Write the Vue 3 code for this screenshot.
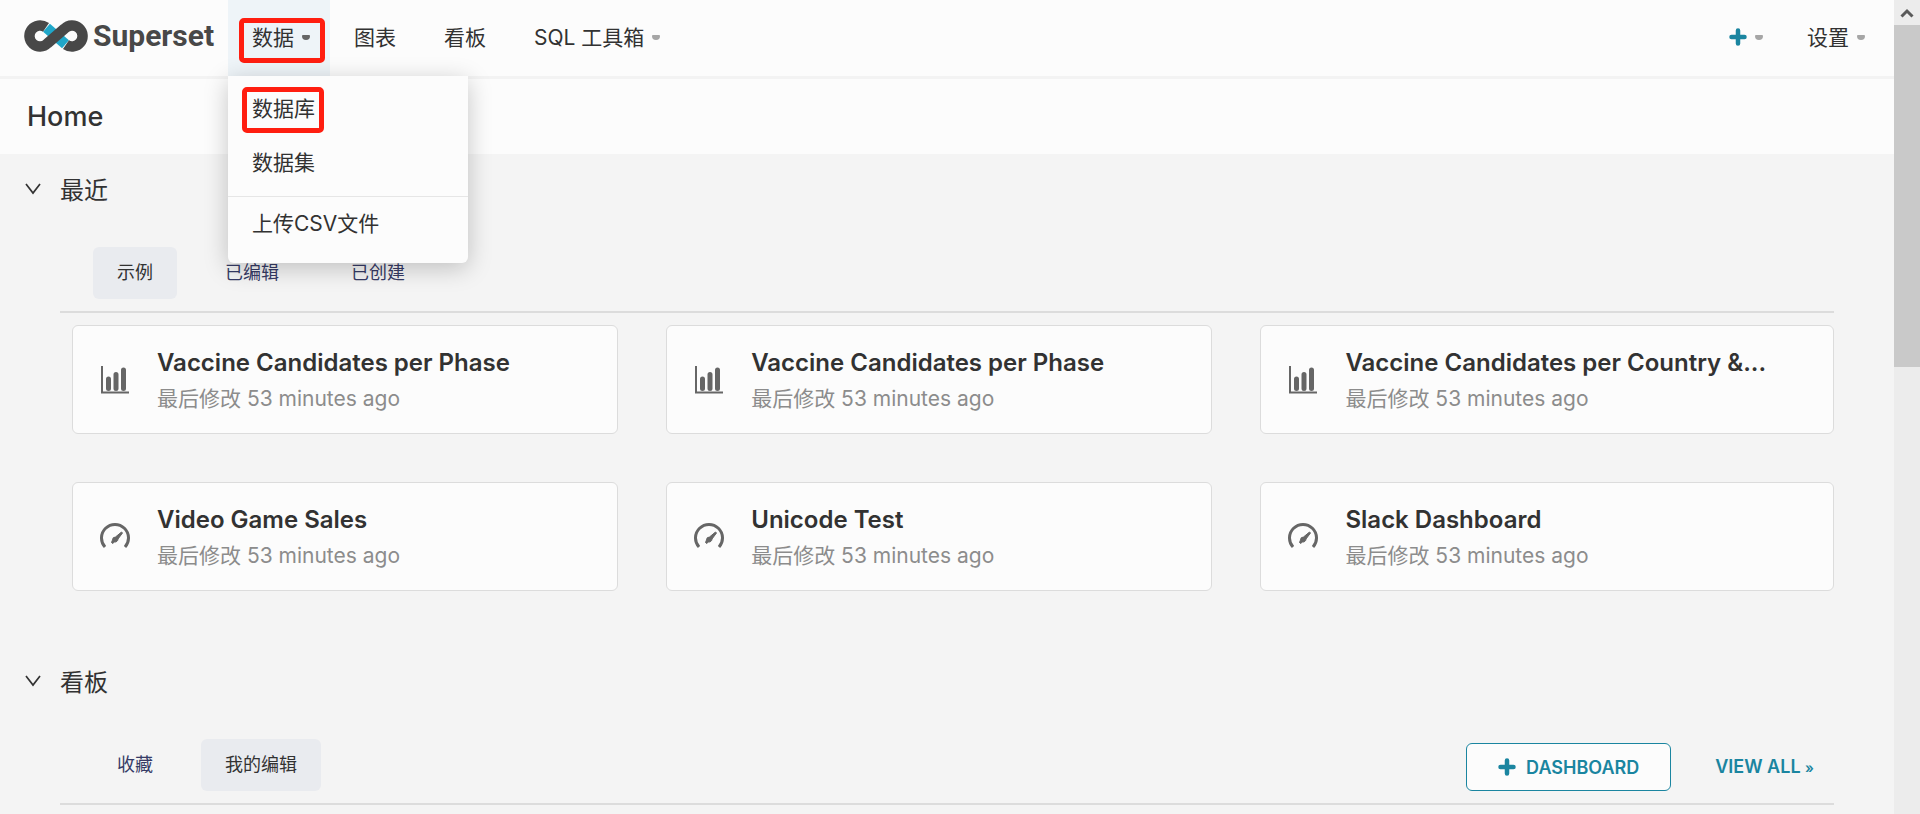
<script setup>
import { ref } from 'vue'

const menuOpen = ref(true)
const recentTab = ref('示例')
const boardTab = ref('我的编辑')

const recentTabs = ['示例', '已编辑', '已创建']
const boardTabs = ['收藏', '我的编辑']

const cards = [
  { title: 'Vaccine Candidates per Phase', type: 'chart' },
  { title: 'Vaccine Candidates per Phase', type: 'chart' },
  { title: 'Vaccine Candidates per Country &...', type: 'chart' },
  { title: 'Video Game Sales', type: 'dashboard' },
  { title: 'Unicode Test', type: 'dashboard' },
  { title: 'Slack Dashboard', type: 'dashboard' }
]
</script>
<template>
  <div class="page">
    <div class="content">
      <header class="navbar">
        <a class="brand" href="#">
          <svg class="brand-icon" viewBox="0 0 64 32" aria-hidden="true">
            <path class="accent" d="M22.500 7.800L41.500 24.200" />
            <path class="loop" d="M22 7.400A10.500 10.500 0 1 0 23.400 23.400L40.600 8.600A10.500 10.500 0 1 1 42 24.600" />
          </svg>
          <span>Superset</span>
        </a>
        <nav class="menu">
          <div class="menu-slot">
            <button class="menu-item active" @click="menuOpen = !menuOpen">
              <span>数据</span><i class="caret"></i>
              <span class="marker marker-nav"></span>
            </button>
            <div v-if="menuOpen" class="dropdown">
              <a href="#">数据库<span class="marker marker-option"></span></a>
              <a href="#">数据集</a>
              <hr>
              <a href="#">上传CSV文件</a>
            </div>
          </div>
          <a class="menu-item" href="#">图表</a>
          <a class="menu-item" href="#">看板</a>
          <button class="menu-item">SQL 工具箱<i class="caret"></i></button>
        </nav>
        <div class="menu right">
          <button class="menu-item" aria-label="新建">
            <svg class="plus" viewBox="0 0 18 18"><path d="M9 2.500V15.500M2.500 9H15.500" /></svg><i class="caret"></i>
          </button>
          <button class="menu-item">设置<i class="caret"></i></button>
        </div>
      </header>

      <div class="title-bar"><h1>Home</h1></div>

      <section class="panel">
        <h2>
          <svg class="chevron" viewBox="0 0 18 14"><path d="M2 2L9 11L16 2" /></svg>
          最近
        </h2>
        <div class="panel-body">
          <div class="toolbar">
            <button v-for="tab in recentTabs" :key="tab" class="tab"
                    :class="{ selected: tab === recentTab }" @click="recentTab = tab">{{ tab }}</button>
          </div>
          <div class="cards">
            <article v-for="(card, i) in cards" :key="i" class="card">
              <svg v-if="card.type === 'chart'" class="card-icon" viewBox="0 0 30 30">
                <path class="axis" d="M2 1V27.500H29" />
                <path class="bars" d="M8.500 14V23.500M16 9.500V23.500M23.500 5V23.500" />
              </svg>
              <svg v-else class="card-icon" viewBox="0 0 30 30">
                <path class="dial" d="M5 25A13.500 13.500 0 1 1 25 25" />
                <path class="needle" d="M21.500 10L22.500 11L18 17A3 3 0 0 1 14.500 20L12.500 21.500L11.500 20.500L12.500 18A3 3 0 0 1 15.500 15Z" />
              </svg>
              <div class="card-text">
                <h3>{{ card.title }}</h3>
                <p>最后修改 53 minutes ago</p>
              </div>
            </article>
          </div>
        </div>
      </section>

      <section class="panel">
        <h2>
          <svg class="chevron" viewBox="0 0 18 14"><path d="M2 2L9 11L16 2" /></svg>
          看板
        </h2>
        <div class="panel-body">
          <div class="toolbar">
            <button v-for="tab in boardTabs" :key="tab" class="tab"
                    :class="{ selected: tab === boardTab }" @click="boardTab = tab">{{ tab }}</button>
            <div class="actions">
              <button class="create">
                <svg class="plus" viewBox="0 0 18 18"><path d="M9 2.500V15.500M2.500 9H15.500" /></svg>
                DASHBOARD
              </button>
              <a class="view-all" href="#">VIEW ALL <span>»</span></a>
            </div>
          </div>
        </div>
      </section>
    </div>

    <div class="scrollbar" aria-hidden="true">
      <div class="scroll-arrow">
        <svg viewBox="0 0 14 12"><path d="M1.500 9.500L7 4L12.500 9.500" /></svg>
      </div>
      <div class="scroll-thumb"></div>
    </div>
  </div>
</template>
<style>
body {
  margin: 0;
}
</style>
<style scoped>
.page {
  display: flex;
  height: 100vh;
  overflow: hidden;
  background: #f4f4f4;
  color: #323232;
  font-family: Inter, "Noto Sans CJK SC", sans-serif;
  font-size: 21px;
  line-height: 30px;
}

.content {
  flex: 1;
  min-width: 0;
  overflow: hidden;
}

a {
  color: inherit;
  text-decoration: none;
}

button {
  font: inherit;
  color: inherit;
  background: none;
  border: none;
  padding: 0;
  cursor: pointer;
}

h1,
h2,
h3,
p {
  margin: 0;
}

.navbar {
  display: flex;
  height: 76px;
  background: #fcfcfc;
  border-bottom: 3px solid #f3f3f3;
}

.brand {
  display: flex;
  align-items: center;
  gap: 5px;
  width: 204px;
  padding: 0 0 4px 24px;
  box-sizing: border-box;
  margin-right: 24px;
  font-family: Roboto, sans-serif;
  font-size: 30px;
  font-weight: 700;
  color: #484848;
}

.brand-icon {
  flex: none;
  width: 64px;
  height: 32px;
}

.loop,
.accent {
  fill: none;
  stroke: #484848;
  stroke-width: 10.5;
}

.accent {
  stroke: #20a7c9;
}

.menu {
  display: flex;
}

.menu.right {
  margin-left: auto;
  padding-right: 9px;
}

.menu-slot {
  display: flex;
  position: relative;
}

.menu-item {
  display: flex;
  align-items: center;
  position: relative;
  padding: 0 24px;
  height: 76px;
  box-sizing: border-box;
}

.menu-item:has(.caret) {
  padding-right: 20px;
}

.menu-item.active {
  background: #eef4f8;
}

.caret {
  width: 8px;
  height: 5px;
  margin: 0 0 2px 8px;
  border-radius: 1px 1px 4px 4px;
  background: #a6a6a6;
}

.active .caret {
  background: #666;
}

.plus {
  width: 18px;
  height: 18px;
  margin-bottom: 2px;
  fill: none;
  stroke: #1a85a0;
  stroke-width: 4.5;
  stroke-linecap: round;
}

.dropdown {
  position: absolute;
  top: 76px;
  left: 0;
  z-index: 5;
  width: 240px;
  padding: 6px 0 12px;
  box-sizing: border-box;
  background: #fcfcfc;
  border-radius: 0 0 6px 6px;
  box-shadow: 0 5px 24px rgba(0, 0, 0, 0.22);
}

.dropdown a {
  display: block;
  position: relative;
  padding: 0 24px;
  line-height: 54px;
}

.dropdown hr {
  margin: 6px 0 0;
  border: none;
  border-top: 1px solid #e6e6e6;
}

.marker {
  position: absolute;
  box-sizing: border-box;
  border: 5px solid #ff1e10;
  border-radius: 5px;
  pointer-events: none;
}

.marker-nav {
  left: 11px;
  top: 18px;
  width: 86px;
  height: 45px;
}

.marker-option {
  left: 14px;
  top: 5px;
  width: 82px;
  height: 46px;
}

.title-bar {
  padding: 18px 27px 17px;
  background: #fcfcfc;
}

h1 {
  font-size: 27px;
  font-weight: 500;
  line-height: 40px;
}

.panel {
  padding: 17px 60px 55px 24px;
}

h2 {
  display: flex;
  align-items: center;
  gap: 18px;
  font-size: 24px;
  font-weight: 400;
  line-height: 40px;
}

.chevron {
  width: 18px;
  height: 14px;
  margin-bottom: 4px;
  fill: none;
  stroke: #323232;
  stroke-width: 1.7;
}

.panel-body {
  padding: 36px 0 0 36px;
}

.toolbar {
  display: flex;
  align-items: center;
  gap: 24px;
  padding: 0 0 12px 33px;
  border-bottom: 2px solid #dcdcdc;
}

.tab {
  height: 52px;
  padding: 0 24px;
  border-radius: 6px;
  font-size: 18px;
  color: #363b66;
}

.tab.selected {
  background: #e9ebef;
  color: #323232;
}

.cards {
  display: grid;
  grid-template-columns: 1fr 1fr 1.05fr;
  gap: 48px;
  padding: 12px 0 0 12px;
}

.card {
  display: flex;
  align-items: center;
  gap: 27px;
  min-width: 0;
  height: 109px;
  padding: 0 24px 0 27px;
  box-sizing: border-box;
  background: #fcfcfc;
  border: 1px solid #dcdcdc;
  border-radius: 6px;
}

.card-icon {
  flex: none;
  width: 30px;
  height: 30px;
  fill: none;
  stroke: #666;
}

.axis {
  stroke-width: 2;
}

.bars {
  stroke-width: 5;
  stroke-linecap: round;
}

.dial {
  stroke-width: 3;
}

.needle {
  fill: #666;
  stroke-width: 1;
}

.card-text {
  min-width: 0;
  padding-top: 3px;
}

h3 {
  overflow: hidden;
  white-space: nowrap;
  text-overflow: ellipsis;
  font-size: 24px;
  font-weight: 600;
  line-height: 36px;
}

.card p {
  color: #8c8c8c;
  line-height: 36px;
}

.actions {
  display: flex;
  align-items: center;
  gap: 44px;
  margin-left: auto;
  padding: 3px 20px 0 0;
  font-size: 18px;
  font-weight: 600;
  color: #1a85a0;
}

.create {
  display: flex;
  align-items: center;
  gap: 10px;
  height: 48px;
  padding: 2px 31px 0;
  border: 1px solid #1a85a0;
  border-radius: 6px;
  background: #fcfcfc;
}

.view-all {
  padding-top: 2px;
}

.view-all span {
  font-size: 14px;
}

.scrollbar {
  flex: none;
  width: 26px;
  background: #ececec;
}

.scroll-arrow {
  display: flex;
  align-items: center;
  justify-content: center;
  height: 25px;
}

.scroll-arrow svg {
  width: 14px;
  height: 12px;
  fill: none;
  stroke: #5a5a5a;
  stroke-width: 3;
}

.scroll-thumb {
  height: 42%;
  background: #c9c9c9;
}
</style>
